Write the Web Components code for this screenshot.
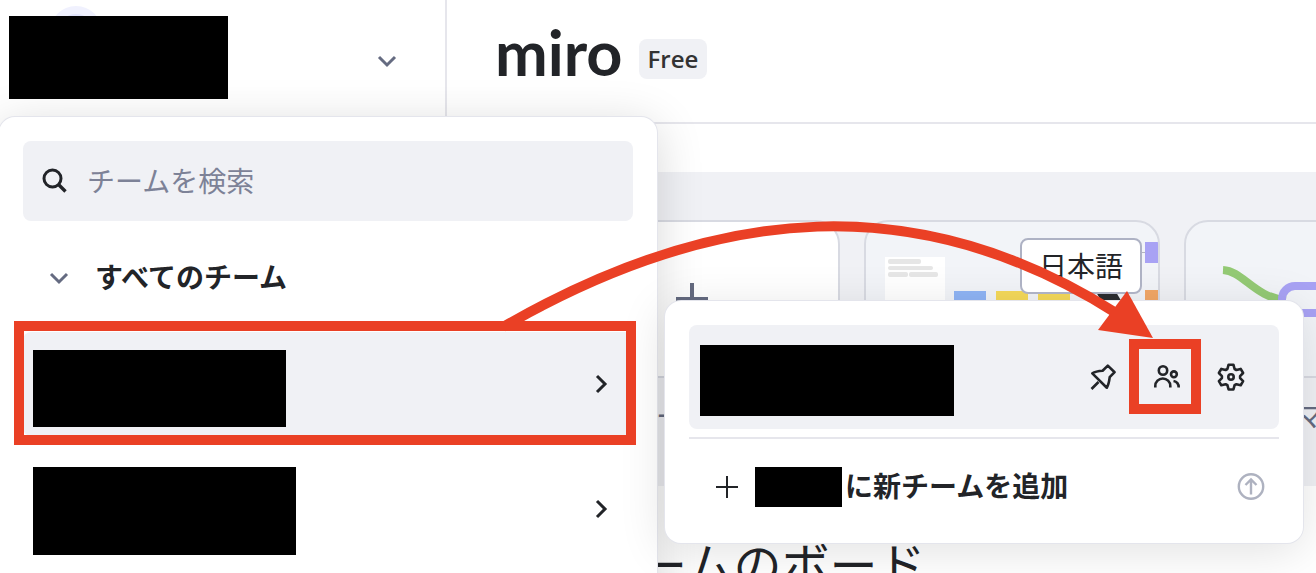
<!DOCTYPE html>
<html lang="ja">
<head>
<meta charset="utf-8">
<title>Miro</title>
<style>
  html, body { height: 100%; margin: 0; }
  body {
    overflow: hidden;
    background: #fff;
    color: #222428;
    font-family: "Noto Sans", "Noto Sans CJK JP", sans-serif;
    font-size: 28px;
    line-height: 40px;
  }
</style>
</head>
<body>
<miro-app></miro-app>

<script>
const define = (name, markup) => {
  const template = document.createElement('template');
  template.innerHTML = markup;
  customElements.define(name, class extends HTMLElement {
    constructor() {
      super();
      this.attachShadow({ mode: 'open' }).append(template.content.cloneNode(true));
    }
  });
};

/* Icons: every glyph lives on a 32px grid */
const glyphs = {
  down: '<path d="M8 12l8 8 8-8" stroke-width="3"/>',
  right: '<path d="M12 8l8 8-8 8" stroke-width="3"/>',
  search: '<circle cx="13.500" cy="13.500" r="8.5" stroke-width="3"/><path d="M19.500 19.500l7 7" stroke-width="3.4"/>',
  plus: '<path d="M16 5v22M5 16h22" stroke-width="2"/>',
  bigplus: '<path d="M16 0v32M0 16h32" stroke-width="4"/>',
  pin: '<path d="M4.500 28L11.500 21M20.800 4.600L27.600 11.200L22.700 16.200C22.200 20 21.800 23.500 19.800 26.700L5.300 12.400C8.500 10.200 12 9.900 15.600 9.700Z" stroke-width="2.600" stroke-linejoin="round"/>',
  people: '<circle cx="12" cy="9.500" r="4.200"/><circle cx="22.900" cy="13.300" r="2.900"/><path d="M4.300 26.500v-1.500a7.500 7.500 0 0 1 15 0v1.500M22.500 20c3 .5 5.200 2.800 5.200 6.500"/>',
  gear: '<path d="M13.600 3.700h4.800l1.200 4.300 1.800 1 4.300-1.100 2.400 4.100-3 3.100v2l3 3.100-2.400 4.100-4.300-1.100-1.800 1-1.200 4.300h-4.800l-1.200-4.300-1.800-1-4.300 1.100-2.400-4.100 3-3.100v-2l-3-3.100 2.400-4.100 4.300 1.100 1.800-1z" stroke-linejoin="round"/><circle cx="16" cy="16" r="2.700"/>',
  upgrade: '<circle cx="16" cy="15.500" r="12.200" stroke-width="2.400"/><path d="M16 23.500V9.500M10.500 14L16 8.500l5.500 5.500" stroke-width="2.400"/>'
};
customElements.define('ui-icon', class extends HTMLElement {
  connectedCallback() {
    if (this.shadowRoot) return;
    this.attachShadow({ mode: 'open' }).innerHTML = `
      <style>
        :host { display: block; flex: none; width: 32px; height: 32px; }
        svg { display: block; fill: none; stroke: currentColor; stroke-width: 2.600; }
      </style>
      <svg width="32" height="32" viewBox="0 0 32 32" aria-hidden="true">${glyphs[this.getAttribute('name')]}</svg>`;
  }
});

define('redacted-block', `
  <style>
    :host { display: block; flex: none; position: relative; background: #000; width: var(--w); height: var(--h); }
  </style>`);

define('workspace-switcher', `
  <style>
    :host { display: block; }
    button {
      position: relative; display: flex; align-items: center; justify-content: space-between;
      box-sizing: border-box; width: 100%; height: 114px; padding: 0 42px 0 9px;
      border: 0; background: none; color: #656b81;
    }
    .avatar {
      position: absolute; left: 50px; top: 6px; box-sizing: border-box;
      width: 52px; height: 52px; border: 8px solid #f0f1fe; border-radius: 50%; background: #e0e3fb;
    }
    ui-icon { margin-top: 8px; }
  </style>
  <button aria-label="ワークスペース">
    <span class="avatar"></span>
    <redacted-block style="--w:219px;--h:83px"></redacted-block>
    <ui-icon name="down"></ui-icon>
  </button>`);

define('app-header', `
  <style>
    :host {
      display: flex; align-items: center; gap: 16px; box-sizing: border-box;
      height: 124px; padding: 0 48px 4px; border-bottom: 2px solid #e6e6ec;
    }
    .logo { padding-bottom: 14px; font: 700 63px/64px Lato, sans-serif; color: #222428; text-decoration: none; }
    .plan {
      padding: 0 9px; border-radius: 8px; background: #f0f1f5; color: #333;
      font: 600 24px/40px "Open Sans", sans-serif;
    }
  </style>
  <a class="logo" href="#">miro</a>
  <span class="plan">Free</span>`);

define('template-card', `
  <style>
    :host { display: block; flex: none; width: 296px; color: #656b81; }
    .cover {
      display: flex; align-items: center; justify-content: center; overflow: hidden;
      box-sizing: border-box; height: 158px; border: 2px solid #d8dae2; border-radius: 24px;
      background: var(--cover, #f2f4f8);
    }
    .label { padding-top: 18px; white-space: nowrap; }
  </style>
  <div class="cover"><slot name="cover"></slot></div>
  <div class="label"><slot></slot></div>`);

define('template-strip', `
  <style>
    :host {
      display: flex; gap: 24px; box-sizing: border-box; height: 314px; overflow: hidden;
      margin: 48px 0 0 49px; padding: 48px; background: #f0f1f5; border-radius: 16px 0 0 16px;
    }
    svg { display: block; flex: none; }
  </style>
  <template-card style="--cover:#fff">
    <ui-icon slot="cover" name="bigplus"></ui-icon>新しいボード
  </template-card>
  <template-card>
    <svg slot="cover" width="292" height="154" viewBox="866 222 292 154" aria-hidden="true">
      <path fill="#fff" d="M885 257h60v80h-60z"/>
      <g fill="#e6e6e6">
        <rect x="888" y="259" width="33" height="5" rx="2"/><rect x="888" y="266" width="45" height="4" rx="2"/>
        <rect x="888" y="272" width="20" height="5" rx="2"/><rect x="909" y="272" width="29" height="5" rx="2"/>
      </g>
      <path fill="#8fb4f5" d="M954 291h32v32h-32z"/>
      <path fill="#f5d95a" d="M996 291h32v32h-32zM1038 291h32v32h-32z"/>
      <path fill="#2b2c30" d="M1096 292h20l7 12h-20z"/>
      <path stroke="#b4b6bf" d="M1130 252.500h16"/>
      <path fill="#a8a2f4" d="M1145 242h13v21h-13z"/>
      <path fill="#f2a766" d="M1145 290h13v32h-13z"/>
    </svg>
  </template-card>
  <template-card>
    <svg slot="cover" width="292" height="154" viewBox="1186 222 292 154" fill="none" stroke-width="8" aria-hidden="true">
      <path stroke="#94ca75" d="M1223 270C1243 271 1255 298 1286 300"/>
      <rect stroke="#a8a2f4" x="1282" y="286" width="140" height="27" rx="13"/>
    </svg>マインドマップ
  </template-card>`);

define('team-row', `
  <style>
    :host { display: block; }
    button {
      display: flex; align-items: center; justify-content: space-between; box-sizing: border-box;
      width: 100%; height: 104px; padding: 0 16px 0 10px; border: 0; border-radius: 8px;
      background: var(--row, none); color: #222428;
    }
    redacted-block { margin-top: var(--drop, 4px); }
  </style>
  <button aria-label="チーム">
    <redacted-block></redacted-block>
    <ui-icon name="right"></ui-icon>
  </button>`);

define('team-menu', `
  <style>
    :host {
      display: flex; flex-direction: column; box-sizing: border-box; padding: 24px;
      border-radius: 16px; background: #fff;
      box-shadow: 0 0 0 1px #e4e5ec, 0 8px 48px rgba(0, 0, 0, .16);
    }
    .search {
      display: flex; align-items: center; gap: 16px; height: 80px; padding: 0 16px;
      border-radius: 8px; background: #f0f1f5;
    }
    input {
      flex: 1; min-width: 0; padding: 0; border: 0; outline: 0; background: none;
      color: inherit; font: inherit;
    }
    input::placeholder { color: #7d8297; opacity: 1; }
    h2 {
      display: flex; align-items: center; gap: 20px; margin: 20px 0 19px; padding-left: 20px;
      font-size: 28px; line-height: 72px;
    }
    h2 ui-icon { margin-top: 2px; color: #656b81; }
    .rows { display: grid; gap: 21px; }
  </style>
  <label class="search"><ui-icon name="search"></ui-icon><input type="text" placeholder="チームを検索" aria-label="チームを検索"></label>
  <h2><ui-icon name="down"></ui-icon>すべてのチーム</h2>
  <div class="rows">
    <team-row style="--row:#f0f1f5;--w:253px;--h:77px;--drop:8px"></team-row>
    <team-row style="--w:263px;--h:88px"></team-row>
  </div>`);

define('team-actions', `
  <style>
    :host {
      display: block; box-sizing: border-box; padding: 24px 24px 16px;
      border-radius: 16px; background: #fff;
      box-shadow: 0 0 0 1px #e4e5ec, 0 8px 48px rgba(0, 0, 0, .12);
    }
    button { padding: 0; border: 0; background: none; color: inherit; font: inherit; }
    .team {
      display: flex; align-items: center; gap: 32px; box-sizing: border-box; height: 104px;
      padding: 0 32px 0 11px; border-radius: 8px; background: #f0f1f5;
    }
    .team redacted-block { margin: 6px auto 0 0; }
    hr { height: 2px; margin: 8px 0; border: 0; background: #e6e6ec; }
    .add { display: flex; align-items: center; width: 100%; height: 80px; padding: 0 12px 0 22px; font-weight: 700; }
    .add redacted-block { margin: 0 3px 0 12px; }
    .add span { padding-bottom: 2px; }
    .add ui-icon:last-child { margin-left: auto; color: #aeb2c0; }
  </style>
  <div class="team">
    <redacted-block style="--w:254px;--h:71px"></redacted-block>
    <button aria-label="ピン留め"><ui-icon name="pin"></ui-icon></button>
    <button aria-label="メンバー"><ui-icon name="people"></ui-icon></button>
    <button aria-label="設定"><ui-icon name="gear"></ui-icon></button>
  </div>
  <hr>
  <button class="add">
    <ui-icon name="plus"></ui-icon>
    <redacted-block style="--w:87px;--h:40px"></redacted-block>
    <span>に新チームを追加</span>
    <ui-icon name="upgrade"></ui-icon>
  </button>`);

define('language-tip', `
  <style>
    :host {
      display: block; padding: 6px 17px; border: 2px solid #aeb2c4; border-radius: 8px;
      background: #fff; white-space: nowrap;
    }
  </style>
  <slot></slot>`);

define('guide-marks', `
  <style>
    :host { display: block; pointer-events: none; }
    svg { display: block; }
  </style>
  <svg width="1316" height="573" viewBox="0 0 1316 573" fill="none" stroke="#ea4025" stroke-width="10" aria-hidden="true">
    <path d="M503 327C720 202 920 189 1116 313"/>
    <path d="M1127 291L1153 338L1098 330Z" fill="#ea4025" stroke="none"/>
    <rect x="19" y="326" width="612" height="114"/>
    <rect x="1134" y="344" width="62" height="65"/>
  </svg>`);

define('miro-app', `
  <style>
    :host { position: relative; display: grid; grid-template-columns: 447px minmax(0, 1fr); height: 100%; overflow: hidden; }
    aside { border-right: 2px solid #e6e6ec; }
    h1 { margin: 43px 48px; font-size: 48px; line-height: 72px; font-weight: 400; white-space: nowrap; }
    team-menu { position: absolute; left: -1px; top: 117px; width: 658px; height: 600px; }
    team-actions { position: absolute; left: 665px; top: 301px; width: 638px; }
    language-tip { position: absolute; left: 1020px; top: 238px; }
    guide-marks { position: absolute; left: 0; top: 0; }
  </style>
  <aside><workspace-switcher></workspace-switcher></aside>
  <main>
    <app-header></app-header>
    <template-strip></template-strip>
    <h1>このチームのボード</h1>
  </main>
  <team-menu></team-menu>
  <team-actions></team-actions>
  <language-tip>日本語</language-tip>
  <guide-marks></guide-marks>`);
</script>
</body>
</html>
